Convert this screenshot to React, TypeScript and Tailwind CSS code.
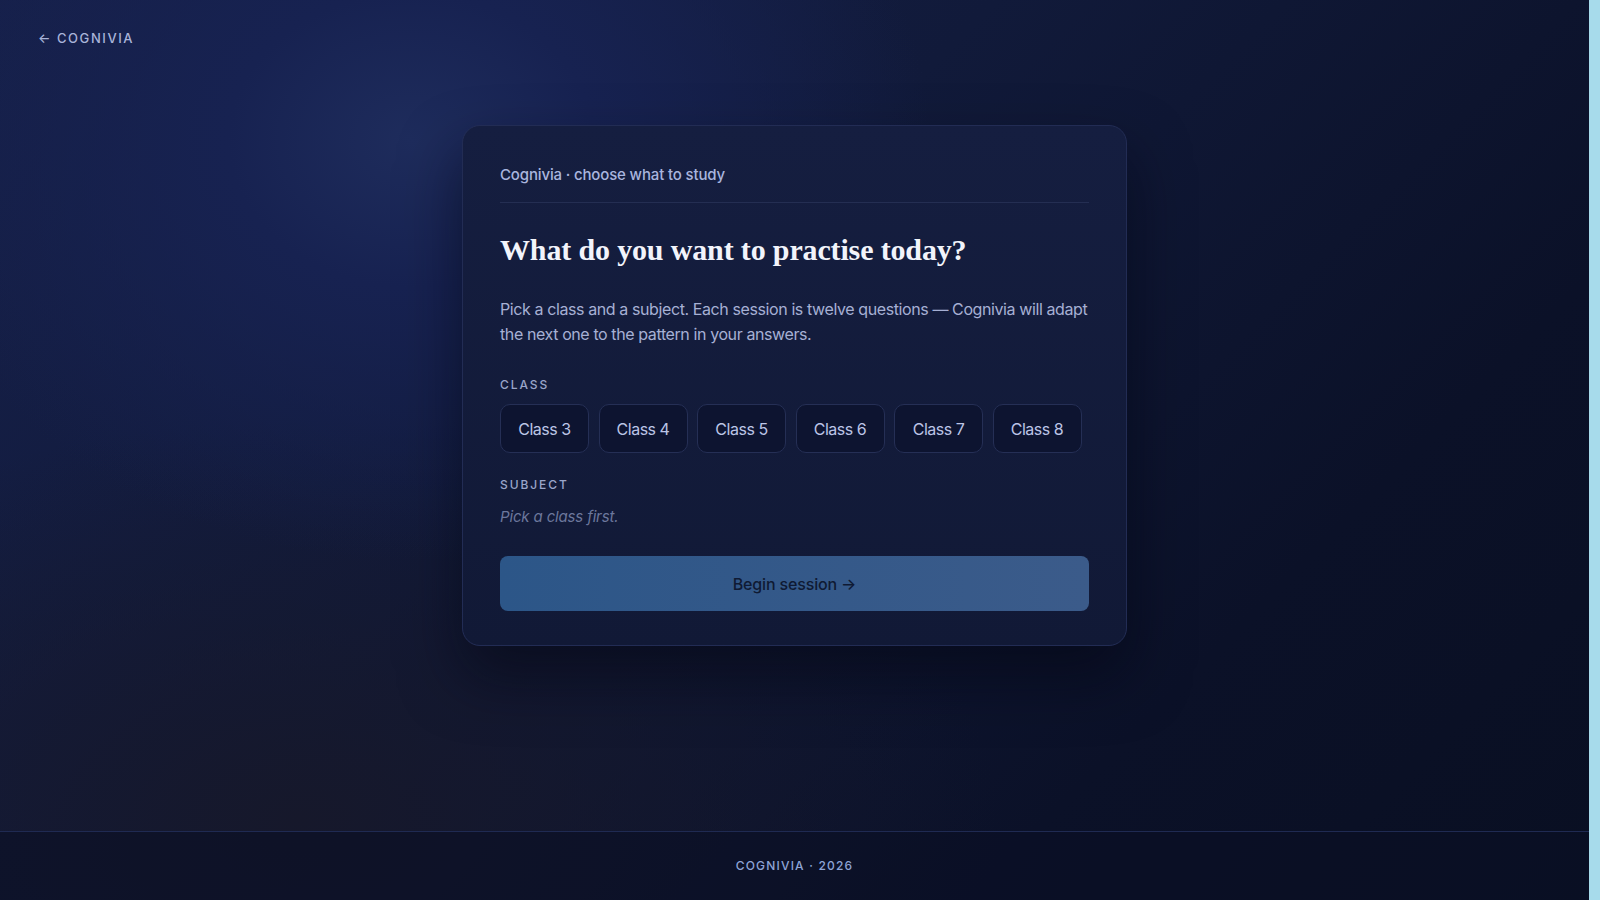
import React, { useState } from "react";

const classes = ["Class 3", "Class 4", "Class 5", "Class 6", "Class 7", "Class 8"];

const sans = "font-['Inter','Noto_Sans',sans-serif]";

function ClassPicker() {
  const [picked, setPicked] = useState<string | null>(null);

  return (
    <div className="flex flex-col">
      {/* CLASS */}
      <div className="mt-[31px] text-[12px] leading-[16px] tracking-[0.16em] text-[#9aa5c9] font-medium">
        CLASS
      </div>
      <div className="mt-[11px] flex gap-[9.5px]">
        {classes.map((c) => (
          <button
            key={c}
            onClick={() => setPicked(c)}
            className={`h-[49px] w-[89px] rounded-[10px] border text-[16px] tracking-[-0.03em] ${
              picked === c
                ? "border-[#4f74b5] bg-[#1a2a52] text-white"
                : "border-[#252f55] bg-[#0d1430] text-[#bcc5e6]"
            }`}
          >
            {c}
          </button>
        ))}
      </div>

      {/* SUBJECT */}
      <div className="mt-[24px] text-[12px] leading-[16px] tracking-[0.16em] text-[#9aa5c9] font-medium">
        SUBJECT
      </div>
      <p className="mt-[14px] text-[15px] leading-[20px] italic text-[#6c779c] tracking-[-0.01em]">
        {picked ? "Choose a subject." : "Pick a class first."}
      </p>

      <button className="mt-[29px] h-[55px] w-full rounded-[8px] bg-gradient-to-r from-[#2c5688] to-[#3b5b8a] text-[16px] font-medium text-[#0f1a33] tracking-[-0.01em]">
        Begin session →
      </button>
    </div>
  );
}

export default function App() {
  return (
    <div className={`flex h-[900px] w-full overflow-hidden ${sans}`}>
      <div className="relative flex flex-1 flex-col bg-[radial-gradient(ellipse_520px_420px_at_410px_140px,#1e2c5c_0%,#172251_35%,transparent_100%),radial-gradient(ellipse_700px_400px_at_300px_820px,#16182b_0%,transparent_100%),linear-gradient(135deg,#16204a_0%,#111a3a_40%,#0b1128_75%,#090f22_100%)]">
        {/* top link */}
        <div className="px-[38px] pt-[25px]">
          <a className="text-[13px] leading-[18px] tracking-[0.12em] text-[#a9b4d9] font-medium">
            ← COGNIVIA
          </a>
        </div>

        {/* card */}
        <div className="flex flex-1 justify-center pt-[76px]">
          <div className="h-fit w-[665px] rounded-[18px] border border-[#222c54] bg-gradient-to-b from-[#151e40] to-[#111936] px-[37px] pt-[38px] pb-[34px] shadow-[0_30px_60px_rgba(3,6,18,0.55)]">
            <div className="text-[15px] leading-[22px] text-[#a9b5de] tracking-[-0.01em] font-medium">
              Cognivia · choose what to study
            </div>
            <div className="mt-[16px] h-px bg-[#242e52]" />
            <h1 className="mt-[28px] font-['Liberation_Serif','Times_New_Roman',serif] font-bold text-[30px] leading-[38px] text-[#f2f4fb] tracking-[-0.005em]">
              What do you want to practise today?
            </h1>
            <p className="mt-[28px] text-[16px] leading-[24.5px] text-[#a6b0d4] tracking-[-0.025em]">
              Pick a class and a subject. Each session is twelve questions — Cognivia will adapt the next one to the pattern in your answers.
            </p>
            <ClassPicker />
          </div>
        </div>

        {/* footer */}
        <footer className="flex h-[69px] items-center justify-center border-t border-[#1f2a52] bg-[#0a0f24]/60">
          <span className="text-[12px] tracking-[0.1em] text-[#8ea4d6] font-medium">
            COGNIVIA · 2026
          </span>
        </footer>
      </div>
      <div className="w-[11px] bg-[#a7dbeb]" />
    </div>
  );
}
